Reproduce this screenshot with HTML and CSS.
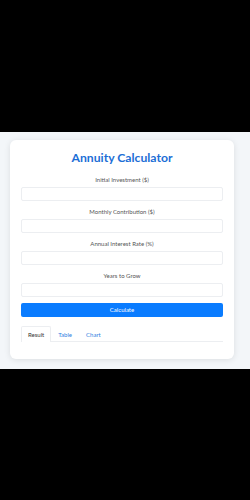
FILE: index.html
```html
<!DOCTYPE html>
<html lang="en">
<head>
    <meta charset="UTF-8">
    <meta name="viewport" content="width=device-width, initial-scale=1.0">
    <title>Annuity Calculator</title>
    <link rel="stylesheet" href="styles.css">
</head>
<body>
    <div class="page">
        <div class="calc-card">
            <h1>Annuity Calculator</h1>
            <form id="annuityForm">
                <label for="initial">Initial Investment ($)</label>
                <input type="number" id="initial" name="initial">
                <label for="monthly">Monthly Contribution ($)</label>
                <input type="number" id="monthly" name="monthly">
                <label for="rate">Annual Interest Rate (%)</label>
                <input type="number" id="rate" name="rate">
                <label for="years">Years to Grow</label>
                <input type="number" id="years" name="years">
                <button type="button" id="calcBtn">Calculate</button>
            </form>

            <!-- Result tabs -->
            <div class="tabs">
                <a href="#" class="tab active">Result</a>
                <a href="#" class="tab">Table</a>
                <a href="#" class="tab">Chart</a>
            </div>
            <div class="tab-content"></div>
        </div>
    </div>
</body>
</html>
```

FILE: styles.css
```css
html {
    background: #000;
}

body {
    margin: 0;
    height: 100vh;
    display: flex;
    flex-direction: column;
    justify-content: center;
    font-family: 'Lato', 'Noto Sans', sans-serif;
    color: #444;
}

.page {
    background: #f3f6f9;
    padding: 8px 16px 10px 10px;
}

.calc-card {
    background: #fff;
    border-radius: 6px;
    box-shadow: 0 1px 6px rgba(0, 0, 0, 0.1);
    padding: 10px 11px 0;
}

h1 {
    margin: 0 0 10px;
    font-size: 12.2px;
    line-height: 16px;
    font-weight: 700;
    color: #1c6ed6;
    text-align: center;
}

label {
    display: block;
    font-size: 6px;
    line-height: 8px;
    margin-bottom: 3px;
    text-align: center;
    color: #555;
}

input {
    display: block;
    width: 100%;
    height: 14px;
    margin: 0 0 7px;
    padding: 0 4px;
    border: 1px solid #eceef1;
    border-radius: 2px;
    box-sizing: border-box;
    font-size: 7px;
}

button {
    display: block;
    width: 100%;
    height: 14px;
    padding: 0;
    margin-top: -1px;
    background-color: #0a7cff;
    border: none;
    border-radius: 2px;
    color: #fff;
    font-family: inherit;
    font-size: 6px;
    cursor: pointer;
}

.tabs {
    display: flex;
    margin-top: 9px;
    border-bottom: 1px solid #eceef1;
}

.tab {
    padding: 0 6px;
    height: 14px;
    line-height: 15px;
    font-size: 6px;
    color: #2f7de1;
    text-decoration: none;
    border: 1px solid transparent;
    border-bottom: none;
    border-radius: 2px 2px 0 0;
    margin-bottom: -1px;
}

.tab.active {
    color: #333;
    border-color: #eceef1;
    background: #fff;
    height: 15px;
}

.tab-content {
    height: 17px;
}
```
